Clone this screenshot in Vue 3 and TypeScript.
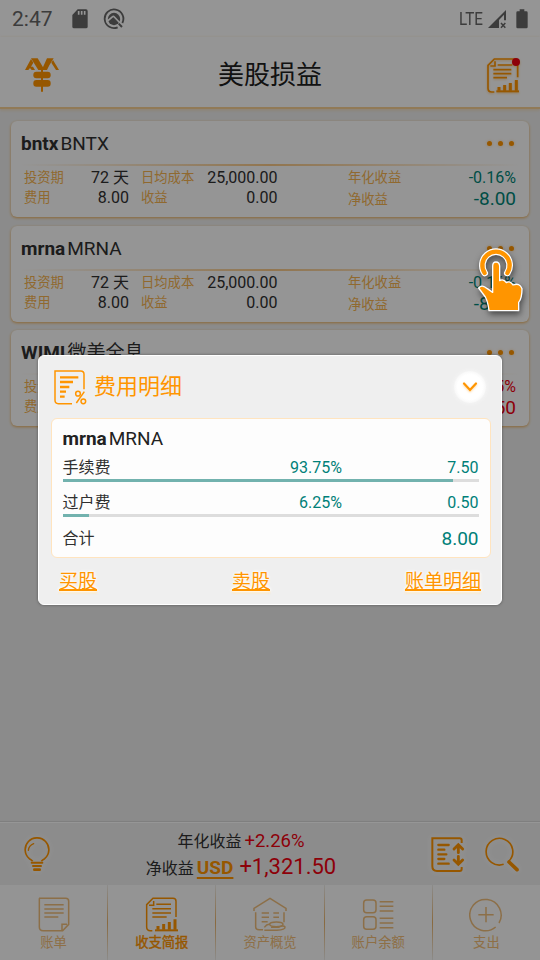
<script setup lang="ts">
interface Stock {
  code: string
  name: string
  annual: string
  net: string
  gain: boolean
}
interface Fee {
  label: string
  percent: number
  amount: string
}

const stocks: Stock[] = [
  { code: 'bntx', name: 'BNTX', annual: '-0.16%', net: '-8.00', gain: false },
  { code: 'mrna', name: 'MRNA', annual: '-0.16%', net: '-8.00', gain: false },
  { code: 'WIMI', name: '微美全息', annual: '+6.75%', net: '+1,337.50', gain: true },
]
const fees: Fee[] = [
  { label: '手续费', percent: 93.75, amount: '7.50' },
  { label: '过户费', percent: 6.25, amount: '0.50' },
]
const tabs: string[] = ['账单', '收支简报', '资产概览', '账户余额', '支出']
</script>

<template>
  <div class="screen">
    <div class="status">
      <span class="time">2:47</span>
      <svg class="sd" width="16" height="20" viewBox="0 0 48 60">
        <path d="M17 1H42Q47 1 47 6V53Q47 58 42 58H6Q1 58 1 53V18Z" fill="#666" />
        <path d="M20 6V17M29 6V17M38 6V17" stroke="#fff" stroke-width="5" />
      </svg>
      <svg class="ring" width="22" height="22" viewBox="0 0 66 66">
        <path d="M44 58A28 28 0 1 1 58 45" fill="none" stroke="#666" stroke-width="5.500" />
        <circle cx="33" cy="33" r="18.500" fill="#666" />
        <path d="M10 42L28 27Q31 24 34 27L54 48" fill="none" stroke="#fdfdfd" stroke-width="5" />
        <path d="M47 47L57 57" stroke="#666" stroke-width="6" />
      </svg>
      <span class="lte"><span>LTE</span></span>
      <svg class="signal" width="20" height="20" viewBox="0 0 60 60">
        <path d="M3 57L57 3V34H51V17L36 33V57Z" fill="#666" />
        <path d="M42 42L55 56M55 42L42 56" stroke="#666" stroke-width="4.500" />
      </svg>
      <svg class="battery" width="12" height="20" viewBox="0 0 36 60">
        <path d="M11 1H25V7H31Q35 7 35 11V54Q35 58 31 58H5Q1 58 1 54V11Q1 7 5 7H11Z" fill="#666" />
      </svg>
    </div>

    <header class="header">
      <svg class="logo" width="34" height="34" viewBox="0 0 102 102" fill="#ff9500">
        <path d="M18 3L25 14L18 26H24L30 36H20L15 30L10 36H0Z" />
        <path d="M18 1H38L59 36H40Z" />
        <path d="M66 1H86L73 22L66 36H50Z" />
        <path d="M84 6L102 36H93L79 14Z" />
        <path d="M48 36H54V101H48Z" />
        <rect x="25" y="41" width="52" height="20" rx="9" />
        <rect x="25" y="66" width="52" height="20" rx="9" />
      </svg>
      <h1>美股损益</h1>
      <div class="report">
        <svg width="33" height="35" viewBox="0 0 99 105" fill="none" stroke="#ff9500" stroke-width="5">
          <path d="M22 102H14Q3 102 3 91V22L22 3H82Q92 3 92 13V58" />
          <path d="M10 24H24V10M32 21H76M19 35H73M19 47H73M19 59H60" />
          <path d="M28 100H96" stroke-width="6" />
          <path d="M36 98V87M53 98V81M70 98V75M88 98V66" stroke-width="9" />
        </svg>
        <i class="badge"></i>
      </div>
    </header>

    <main class="list">
      <section v-for="s in stocks" :key="s.code" class="card">
        <div class="card-title">
          <div><b>{{ s.code }}</b><span>{{ s.name }}</span></div>
          <div class="dots"><i></i><i></i><i></i></div>
        </div>
        <div class="rule"></div>
        <div class="metrics">
          <div class="pair first">
            <p><em>投资期</em><span>72 天</span></p>
            <p><em>费用</em><span>8.00</span></p>
          </div>
          <div class="pair second">
            <p><em>日均成本</em><span>25,000.00</span></p>
            <p><em>收益</em><span>0.00</span></p>
          </div>
          <div class="pair third" :class="{ gain: s.gain }">
            <p><em>年化收益</em><span>{{ s.annual }}</span></p>
            <p class="net"><em>净收益</em><span>{{ s.net }}</span></p>
          </div>
        </div>
      </section>
    </main>

    <div class="summary">
      <svg class="bulb" width="28" height="36" viewBox="0 0 84 108" fill="none" stroke="#ff9500" stroke-width="5">
        <path d="M29 73Q25 68 19 65A35.500 35.500 0 1 1 65 65Q59 68 55 73" />
        <path d="M16 40Q18 25 32 20" stroke-width="4" stroke-linecap="round" />
        <path d="M26 77H58M30 87H54" stroke-width="6" stroke-linecap="round" />
        <path d="M34 98H50" stroke-width="8" stroke-linecap="round" />
      </svg>
      <div class="totals">
        <p class="line-a">年化收益<span>+2.26%</span></p>
        <p class="line-b">净收益<b>USD</b><span>+1,321.50</span></p>
      </div>
      <svg class="sort" width="34" height="36" viewBox="0 0 102 108" fill="none" stroke="#ff9500" stroke-width="6">
        <path d="M92 18V10Q92 4 86 4H4V88Q4 102 18 102H86Q92 102 92 96V90" />
        <path d="M22 24H53M22 38H40M22 52H46M22 66H40M22 80H53" stroke-width="7" stroke-linecap="round" />
        <path d="M82 47V27M69 36L82 23L95 36M82 58V77M69 69L82 82L95 69" stroke-width="8.500" stroke-linecap="round" />
      </svg>
      <svg class="search" width="36" height="36" viewBox="0 0 108 108" fill="none" stroke="#ff9500">
        <path d="M59 82A40 40 0 1 1 75 72" stroke-width="5" />
        <path d="M75 75L99 98" stroke-width="11" stroke-linecap="round" />
      </svg>
    </div>

    <nav class="tabs">
      <div v-for="(t, i) in tabs" :key="t" class="tab" :class="{ active: i === 1 }">
        <svg v-if="i === 0" width="34" height="36" viewBox="0 0 102 108">
          <path d="M6 4H86Q95 4 95 13V82L77 101H18Q7 101 7 90V4M75 99V82H90" />
          <path d="M22 23H80M22 36H80M22 48H80M22 60H64" />
        </svg>
        <svg v-else-if="i === 1" width="34" height="36" viewBox="0 0 102 108">
          <path d="M22 101H16Q5 101 5 90V23L24 4H84Q93 4 93 13V60" />
          <path d="M12 25H26V12M34 22H78M22 35H78M22 48H78M22 60H65" />
          <path d="M30 100H99" stroke-width="6" />
          <path d="M39 98V87M56 98V81M73 98V75M90 98V67" stroke-width="9" />
        </svg>
        <svg v-else-if="i === 2" width="34" height="36" viewBox="0 0 102 108">
          <path d="M3 42V34L51 4L99 34V42M8 46V90Q8 98 18 98H30M93 46V76" />
          <path d="M26 48H48M26 61H48M26 74H44M61 48H78M61 61H78" />
          <ellipse cx="70" cy="82" rx="20" ry="7" />
          <path d="M34 91Q42 80 51 82M34 100H72Q98 98 96 90Q92 84 76 91H54" />
        </svg>
        <svg v-else-if="i === 3" width="34" height="36" viewBox="0 0 102 108">
          <rect x="8" y="9" width="37" height="38" rx="9" />
          <rect x="8" y="59" width="37" height="38" rx="9" />
          <path d="M56 14H97M56 28H97M56 42H97M56 64H97M56 78H97M56 92H97" />
        </svg>
        <svg v-else width="34" height="36" viewBox="0 0 102 108">
          <path d="M80 90A47 47 0 1 1 90 78" />
          <path d="M28 53H74M51 30V76" />
        </svg>
        <span>{{ t }}</span>
      </div>
    </nav>

    <div class="backdrop"></div>

    <svg class="hand" width="52" height="72" viewBox="0 0 156 216">
      <path d="M26 81A41 41 0 1 1 94 81" fill="none" stroke="#fff" stroke-width="20" stroke-linecap="round" />
      <path d="M26 81A41 41 0 1 1 94 81" fill="none" stroke="#ff9500" stroke-width="13" stroke-linecap="round" />
      <path d="M50 60Q50 48 60 48Q70 48 71 60V104Q82 97 91 110Q103 103 111 117Q131 109 138 128Q138 157 128 169V194H39Q36 168 28 153L8 126Q17 114 34 128L50 139Z" fill="#ff9500" stroke="#fff" stroke-width="4" stroke-linejoin="round" />
    </svg>

    <section class="dialog">
      <div class="dialog-head">
        <svg width="33" height="35" viewBox="0 0 99 105" fill="none" stroke="#ff9500" stroke-width="4.500">
          <path d="M54 101H13Q3 101 3 91V3H80Q90 3 90 13V58" />
          <path d="M18 22H73M18 36H57M18 51H46M18 65H36M18 80H32" stroke-width="7" />
          <path d="M91 65L67 99" />
          <circle cx="72" cy="71" r="7" />
          <circle cx="88" cy="94" r="7" />
        </svg>
        <h2>费用明细</h2>
        <div class="close">
          <svg width="18" height="12" viewBox="0 0 18 12"><path d="M3 2.500L9 9L15 2.500" fill="none" stroke="#ff9500" stroke-width="2.200" stroke-linecap="round" /></svg>
        </div>
      </div>
      <div class="detail">
        <div class="stock"><b>mrna</b><span>MRNA</span></div>
        <div v-for="f in fees" :key="f.label" class="fee">
          <div class="fee-row"><span>{{ f.label }}</span><span>{{ f.percent }}%</span><span>{{ f.amount }}</span></div>
          <div class="track"><div :style="{ width: f.percent + '%' }"></div></div>
        </div>
        <div class="total"><span>合计</span><span>8.00</span></div>
      </div>
      <div class="links"><a>买股</a><a>卖股</a><a>账单明细</a></div>
    </section>
  </div>
</template>

<style>
body {
  margin: 0;
}
</style>

<style scoped>
.screen {
  position: relative;
  display: flex;
  flex-direction: column;
  width: 540px;
  height: 960px;
  overflow: hidden;
  background: #ededed;
  color: #303030;
  font-family: Roboto, "Noto Sans CJK SC", sans-serif;
  white-space: nowrap;
}
.screen * {
  box-sizing: border-box;
}
p, h1, h2 {
  margin: 0;
  font-weight: 400;
}
em {
  font-style: normal;
}
svg {
  display: block;
  flex: none;
}
.status {
  display: flex;
  align-items: center;
  height: 37px;
  padding: 0 12px;
  background: #fdfdfd;
  color: #666;
}
.time {
  width: 60px;
  padding-top: 1px;
  font-size: 21px;
  line-height: 36px;
}
.ring {
  margin-left: 15px;
}
.lte {
  width: 27px;
  margin-left: auto;
  font-size: 19px;
}
.lte span {
  display: inline-block;
  transform: scaleX(0.8);
  transform-origin: left;
}
.signal {
  margin-left: 1px;
}
.battery {
  margin-left: 9px;
}
.header {
  display: flex;
  height: 72px;
  padding: 21px 20px 0 25px;
  background: #fdfdfd;
  border-bottom: 2px solid #f7cf94;
  box-shadow: 0 1px 3px #f7cf9499;
}
.header h1 {
  margin: 0 auto 0 159px;
  font-size: 26px;
  line-height: 34px;
  color: #202020;
}
.report {
  position: relative;
  width: 33px;
  filter: drop-shadow(0 1px 1px #ff950066);
}
.badge {
  position: absolute;
  top: 0;
  right: 0;
  width: 8px;
  height: 8px;
  border-radius: 50%;
  background: #f00010;
}
.list {
  display: flex;
  flex: 1;
  flex-direction: column;
  gap: 8.500px;
  padding: 12px 11px 0;
}
.card {
  height: 96px;
  border-radius: 6px;
  background: #fdfdfd;
  box-shadow: 0 1px 3px #edaf59;
}
.card-title {
  display: flex;
  align-items: center;
  justify-content: space-between;
  height: 43px;
  padding: 2px 15.500px 0 10px;
  font-size: 19px;
  line-height: 43px;
}
.card-title span {
  margin-left: 2px;
}
.dots {
  display: flex;
  gap: 6px;
}
.dots i {
  width: 5px;
  height: 5px;
  border-radius: 50%;
  background: #ff9500;
  box-shadow: 0 0 3px #ff950066;
}
.rule {
  height: 2px;
  margin: 0 10px;
  background: linear-gradient(90deg, #ffc46800, #f8c887 50%, #ffc46800);
}
.metrics {
  display: flex;
  padding: 2px 13px 0;
  font-size: 16px;
}
.pair p {
  display: flex;
  justify-content: space-between;
  line-height: 20px;
}
.pair em {
  font-size: 13.300px;
  color: #f5b350;
}
.first {
  width: 105px;
}
.second {
  width: 136.500px;
  margin-left: 12px;
}
.third {
  width: 168px;
  margin-left: auto;
  color: #008577;
}
.third.gain {
  color: #f00010;
}
.third .net {
  font-size: 19px;
  line-height: 22px;
}
.third .net em {
  line-height: 24px;
}
.summary {
  display: flex;
  height: 63px;
  padding: 14px 20px 0 23px;
  border-top: 1px solid #fff;
  background: #efefef;
  box-shadow: 0 -1px 1px #d8d8d8;
}
.summary svg {
  filter: drop-shadow(0 0 3px #fff);
}
.totals {
  width: 240px;
  margin: -8px auto 0 70px;
  text-align: center;
  font-size: 16px;
}
.totals span {
  color: #f00010;
}
.line-a {
  line-height: 24px;
}
.line-a span {
  margin-left: 3px;
  font-size: 18.500px;
}
.line-b {
  line-height: 26px;
}
.line-b b {
  margin: 0 6px 0 3px;
  font-size: 19px;
  color: #ff9500;
  text-decoration: underline;
  text-decoration-thickness: 2px;
  text-underline-offset: 3px;
}
.line-b span {
  font-size: 22px;
}
.search {
  margin-left: 19px;
}
.tabs {
  display: flex;
  height: 75px;
  background: #fbfbfb;
}
.tab {
  display: flex;
  flex: 1;
  flex-direction: column;
  align-items: center;
  padding-top: 12px;
  font-size: 13.300px;
  line-height: 20px;
  color: #f1bd77;
  border-right: 1px solid;
  border-image: linear-gradient(#eee, #e9b46b, #eee) 1;
}
.tab:last-child {
  border-right: 0;
}
.tab svg {
  fill: none;
  stroke: #efbd7b;
  stroke-width: 4.500;
}
.tab.active {
  color: #ff9500;
  -webkit-text-stroke: 0.400px #ff9500;
}
.tab.active svg {
  stroke: #ff9500;
}
.backdrop {
  position: absolute;
  inset: 0;
  background: rgba(0, 0, 0, 0.41);
}
.hand {
  position: absolute;
  left: 476px;
  top: 246px;
  filter: drop-shadow(1px 3px 3px #0008);
}
.dialog {
  position: absolute;
  left: 38px;
  top: 355px;
  width: 464px;
  height: 250px;
  padding: 14px 12px 0;
  border: 1px solid #fff;
  border-radius: 6px;
  background: #efefef;
  box-shadow: 0 0 3px #0006;
}
.dialog-head {
  display: flex;
  align-items: flex-start;
  height: 48px;
  padding: 0 3px;
}
.dialog-head h2 {
  margin: 0 auto 0 7px;
  font-size: 22px;
  line-height: 34px;
  color: #ff9500;
}
.close {
  display: flex;
  align-items: center;
  justify-content: center;
  width: 32px;
  height: 32px;
  margin-top: 1px;
  border-radius: 50%;
  background: radial-gradient(#fff 55%, #f7f7f7 72%);
  box-shadow: 0 0 4px #f8f8f8;
}
.close svg {
  filter: drop-shadow(0 1px 1px #ff950066);
}
.detail {
  width: 440px;
  height: 140px;
  margin-left: -0.500px;
  padding: 8px 11px 0;
  border: 1px solid #ffe4bf;
  border-radius: 6px;
  background: #fdfdfd;
}
.stock {
  font-size: 19px;
  line-height: 24px;
  color: #222;
}
.stock span {
  margin-left: 2px;
}
.fee {
  height: 35px;
  padding-top: 7px;
}
.fee-row {
  display: grid;
  grid-template-columns: 130px 149.500px 1fr;
  line-height: 20px;
  font-size: 16px;
  color: #008078;
}
.fee-row span:nth-child(n + 2), .total span:nth-child(2) {
  text-align: right;
}
.fee-row span:first-child, .total span:first-child {
  color: #303030;
}
.track {
  height: 3px;
  margin-top: 1px;
  background: #ddd;
}
.track div {
  height: 3px;
  background: #72b2ae;
}
.total {
  display: flex;
  justify-content: space-between;
  padding-top: 6px;
  font-size: 16px;
  line-height: 24px;
}
.total span:nth-child(2) {
  font-size: 19px;
  color: #008078;
}
.links {
  display: flex;
  justify-content: space-between;
  padding: 10px 8px 0;
  font-size: 19px;
  line-height: 28px;
  color: #ff9500;
}
.links a {
  text-decoration: underline;
  text-decoration-thickness: 1.500px;
  text-underline-offset: 1px;
  text-shadow: 0 0 3px #fff, 0 0 3px #fff, 0 0 4px #fff, 0 2px 2px #ffdca0;
}
</style>
